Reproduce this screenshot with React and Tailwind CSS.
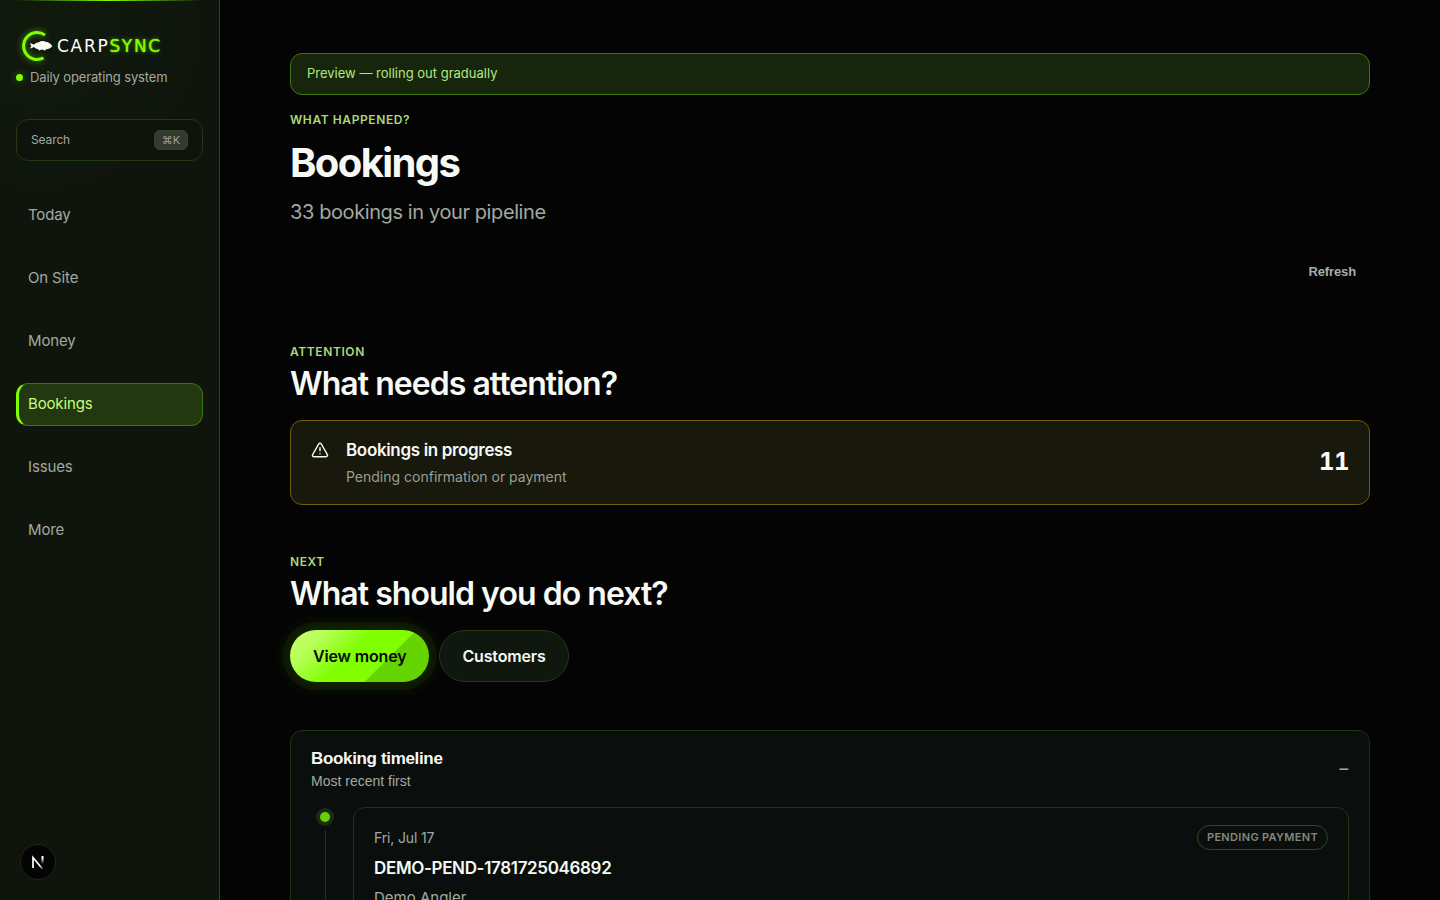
import React from 'react';
import { TriangleAlert } from 'lucide-react';
import clsx from 'clsx';

const NAV_ITEMS = ['Today', 'On Site', 'Money', 'Bookings', 'Issues', 'More'];

const BOOKINGS = [
  {
    date: 'Fri, Jul 17',
    reference: 'DEMO-PEND-1781725046892',
    customer: 'Demo Angler',
    status: 'Pending payment',
  },
];

function Logo() {
  return (
    <a href="#" className="flex items-center">
      <svg width="41" height="40" viewBox="0 0 41 40" fill="none" className="shrink-0 overflow-visible">
        <path
          d="M29 9.100A13.500 13.500 0 1 0 27.500 31.900"
          stroke="#7fff00"
          strokeWidth="3"
          className="[filter:drop-shadow(0_0_3px_rgba(127,255,0,0.6))]"
        />
        <path
          d="M14 17.500c1.500 0 2.700.5 3.800 1 1.500-1.300 3.200-2 5-2.300 2-1.400 5-1.400 6.900-.4 3 .3 5.400 1.900 6.500 4.500-1.300 1.900-3.600 2.900-6.300 3.200l-1.300 1.200-1-1c-1.200.1-2.100.1-3 0l-1.200 1.100-.9-1.400c-1.900-.4-3.400-1.300-4.700-2.400-1.100.9-2.200 1.300-3.600 1.400.2-1 .6-1.800 1.200-2.600-.7-.7-1.200-1.400-1.400-2.300z"
          fill="#f7f9f5"
        />
      </svg>
      <span className="font-['DejaVu_Sans'] text-[17px] leading-10 tracking-widest text-white">
        CARP<span className="text-[#7fff00] [text-shadow:0_0_1px_#7fff00,0_0_4px_rgba(127,255,0,0.6)]">SYNC</span>
      </span>
    </a>
  );
}

function Sidebar() {
  return (
    <aside className="relative flex h-screen w-[220px] shrink-0 flex-col border-r border-[#2b4d12] bg-[#0f150d] bg-[radial-gradient(circle_at_40px_30px,rgba(127,255,0,0.02),transparent_180px)] px-4 pt-[26px]">
      <div className="absolute inset-x-4 top-0 h-px bg-linear-to-r from-transparent via-[#7fff00] to-transparent" />
      <Logo />
      <p className="flex items-center gap-[7px] text-[13px] leading-[22px] tracking-[-0.01em] text-[#a3a9a0]">
        <span className="size-[7px] rounded-full bg-[#7fff00] shadow-[0_0_8px_rgba(127,255,0,0.4)]" />
        Daily operating system
      </p>

      <button
        type="button"
        className="mt-[31px] flex h-[42px] items-center justify-between rounded-xl border border-[#233915] bg-[#0e140c] px-3.5 text-left text-xs tracking-[-0.01em] text-[#a3a9a0]"
      >
        Search
        <kbd className="flex h-5 items-center rounded-md border border-[#2f4722] bg-[#343a32] px-[7px] font-[Inter] text-[11px] text-[#9aa097]">
          ⌘K
        </kbd>
      </button>

      <nav className="mt-[33px] flex flex-col gap-5">
        {NAV_ITEMS.map((item) => (
          <a
            key={item}
            href="#"
            aria-current={item === 'Bookings' ? 'page' : undefined}
            className={clsx(
              'flex h-[43px] items-center rounded-xl text-[15px] tracking-[-0.01em]',
              item === 'Bookings'
                ? 'border border-l-[3px] border-[#3c7510] border-l-[#7fff00] bg-[#233711] pl-[9px] text-[#c5fd7c]'
                : 'px-3 text-[#a3a9a0]'
            )}
          >
            {item}
          </a>
        ))}
      </nav>
    </aside>
  );
}

function Eyebrow({ children }) {
  return <p className="text-xs leading-4 font-semibold tracking-wider text-[#add878] uppercase">{children}</p>;
}

function SectionHeading({ eyebrow, title }) {
  return (
    <>
      <Eyebrow>{eyebrow}</Eyebrow>
      <h2 className="mt-1 mb-4 text-[32px] leading-10 font-semibold tracking-[-0.03em]">{title}</h2>
    </>
  );
}

function TimelineItem({ booking }) {
  return (
    <li className="flex gap-5">
      <div className="flex w-[22px] flex-col items-center pl-1.5">
        <span className="mt-[5px] size-2.5 shrink-0 rounded-full bg-[#66d10a] shadow-[0_0_0_4px_#1a2d10]" />
        <span className="mt-2 w-px flex-1 bg-[#22371a]" />
      </div>
      <article className="flex-1 rounded-xl border border-[#20340f] bg-[#0a0f0d] px-5 py-[17px]">
        <div className="flex items-center justify-between">
          <time className="text-sm tracking-[-0.01em] text-[#a3a9a0]">{booking.date}</time>
          <span className="rounded-full border border-[#33451f] px-[9px] text-[11px] leading-[23px] font-semibold tracking-[0.03em] text-[#83877f] uppercase">
            {booking.status}
          </span>
        </div>
        <h4 className="mt-1.5 text-[17px] leading-6 font-semibold tracking-[-0.02em]">{booking.reference}</h4>
        <p className="mt-1.5 text-[15px] leading-6 text-[#a3a9a0]">{booking.customer}</p>
      </article>
    </li>
  );
}

function BookingsPage() {
  return (
    <main className="h-screen min-w-0 flex-1 overflow-y-auto px-8 pt-[53px] [scrollbar-width:none]">
      <div className="mx-auto max-w-[1080px]">
        <div className="rounded-xl border border-[#3d750f] bg-[#17250d] px-4 pt-[9px] pb-[11px] text-[13px] leading-5 text-[#b3e87a]">
          Preview — rolling out gradually
        </div>

        <header className="mt-[17px]">
          <Eyebrow>What happened?</Eyebrow>
          <h1 className="mt-[11px] text-[40px] leading-12 font-bold tracking-[-0.04em]">Bookings</h1>
          <p className="mt-[9px] text-xl leading-8 tracking-[-0.02em] text-[#a3a9a0]">33 bookings in your pipeline</p>
          <div className="mt-5 flex justify-end">
            <button
              type="button"
              className="h-12 px-3.5 font-['Liberation_Sans'] text-[13px] font-bold tracking-[-0.01em] text-[#a9aea6]"
            >
              Refresh
            </button>
          </div>
        </header>

        <section className="mt-12">
          <SectionHeading eyebrow="Attention" title="What needs attention?" />
          <a href="#" className="flex items-center rounded-xl border border-[#705c0a] bg-[#19180d] px-5 pt-4 pb-[17px]">
            <TriangleAlert className="mt-1 mr-[17px] size-[18px] self-start" strokeWidth={2} />
            <div className="flex-1">
              <h3 className="text-[17px] leading-[26px] font-semibold tracking-[-0.02em]">Bookings in progress</h3>
              <p className="mt-[3px] text-sm leading-[21px] text-[#9a9e94]">Pending confirmation or payment</p>
            </div>
            <span className="text-2xl font-bold tracking-[-0.02em] tabular-nums">11</span>
          </a>
        </section>

        <section className="mt-[49px]">
          <SectionHeading eyebrow="Next" title="What should you do next?" />
          <div className="flex gap-2.5">
            <button
              type="button"
              className="h-[52px] rounded-full bg-[linear-gradient(135deg,#c6ff6b_0%,#b9ff5a_18%,#7fff00_45%,#7fff00_66%,#66d400_66%)] px-[23px] text-base font-semibold tracking-[-0.01em] text-[#060a04] shadow-[0_0_0_8px_rgba(127,255,0,0.05),0_0_24px_rgba(127,255,0,0.15)]"
            >
              View money
            </button>
            <button
              type="button"
              className="h-[52px] rounded-full border border-[#233915] bg-[#10170e] px-[22px] text-base font-semibold tracking-[-0.01em]"
            >
              Customers
            </button>
          </div>
        </section>

        <section className="mt-12 mb-12 rounded-xl border border-[#20340f] bg-[#0a0f0d] px-5 pt-4 pb-5">
          <button type="button" className="flex w-full items-center justify-between text-left font-['Liberation_Sans']">
            <span>
              <span className="block text-[17px] leading-6 font-bold tracking-[-0.02em]">Booking timeline</span>
              <span className="block text-sm leading-5 text-[#a3a9a0]">Most recent first</span>
            </span>
            <span className="text-lg text-[#a3a9a0]">−</span>
          </button>
          <ol className="mt-4">
            {BOOKINGS.map((booking) => (
              <TimelineItem key={booking.reference} booking={booking} />
            ))}
          </ol>
        </section>
      </div>
    </main>
  );
}

function DevBadge() {
  return (
    <button
      type="button"
      aria-label="Open dev tools"
      className="fixed bottom-5 left-5 flex size-9 items-center justify-center rounded-full border border-[#20270f] bg-[#040404]"
    >
      <svg width="14" height="14" viewBox="0 0 14 14" fill="none">
        <defs>
          <linearGradient id="stem" x1="0" y1="0" x2="0" y2="1">
            <stop offset="0.3" stopColor="#fff" />
            <stop offset="1" stopColor="#fff" stopOpacity="0" />
          </linearGradient>
          <linearGradient id="diagonal" x1="2" y1="1" x2="12" y2="14" gradientUnits="userSpaceOnUse">
            <stop offset="0.7" stopColor="#fff" />
            <stop offset="1" stopColor="#fff" stopOpacity="0.2" />
          </linearGradient>
        </defs>
        <path d="M2 13V2.500L12 14.500" stroke="url(#diagonal)" strokeWidth="1.700" />
        <rect x="10.500" y="1" width="2" height="8" fill="url(#stem)" />
      </svg>
    </button>
  );
}

export default function App() {
  return (
    <div className="flex h-screen bg-[#040404] font-[Inter,sans-serif] text-[#f7f9f5]">
      <Sidebar />
      <BookingsPage />
      <DevBadge />
    </div>
  );
}
